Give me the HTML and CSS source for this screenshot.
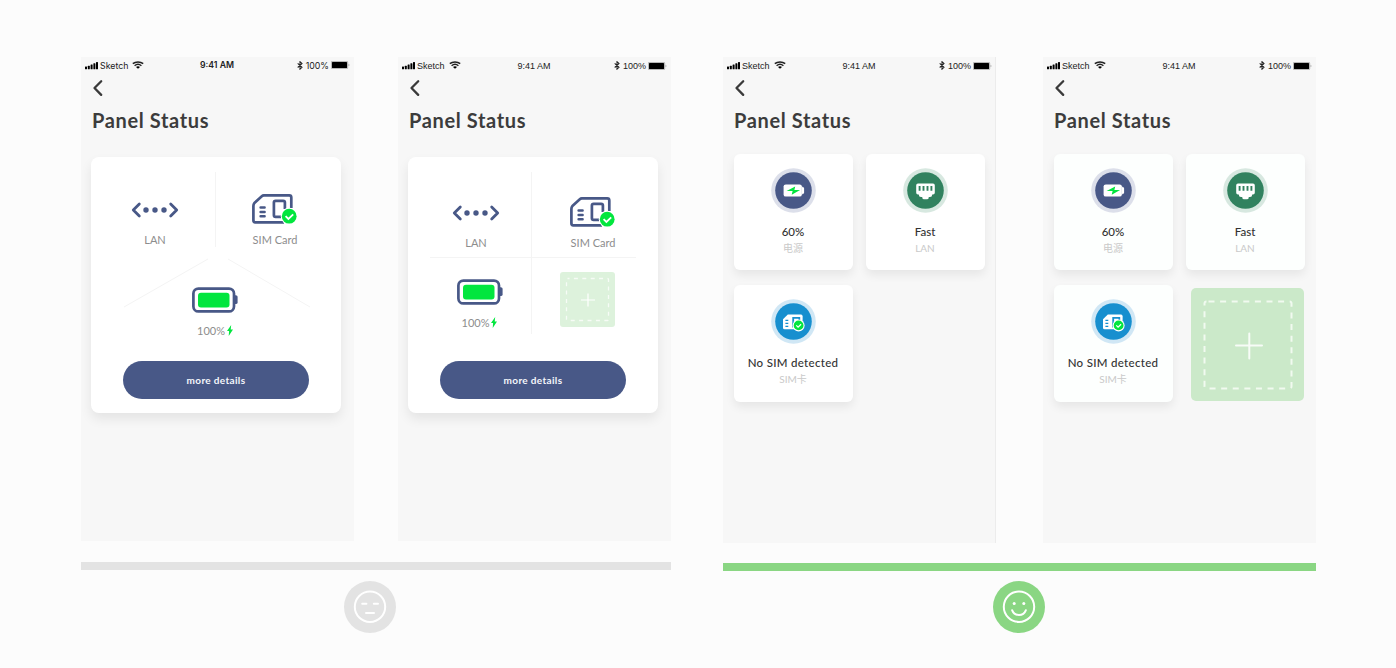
FILE: index.html
```html
<!DOCTYPE html>
<html lang="en">
<head>
<meta charset="utf-8">
<title>Panel Status</title>
<link rel="stylesheet" href="styles.css">
</head>
<body>
<svg width="0" height="0" class="defs">
  <defs>
    <symbol id="signal" viewBox="0 0 13 8"><rect x="0" y="4.6" width="2" height="2.6" rx=".5"/><rect x="2.8" y="3.7" width="2" height="3.5" rx=".5"/><rect x="5.6" y="2.6" width="2" height="4.6" rx=".5"/><rect x="8.4" y="1.2" width="2" height="6" rx=".5"/><rect x="11" y="0" width="2" height="7.2" rx=".5"/></symbol>
    <symbol id="wifi" viewBox="0 0 12 8"><g fill="none" stroke="#222" stroke-width="1.5"><path d="M.8 2.7C3.700.3 8.300.3 11.200 2.700"/><path d="M2.600 4.700C4.600 3 7.400 3 9.400 4.700"/></g><path d="M4 6C5.100 5 6.900 5 8 6L6 7.800Z"/></symbol>
    <symbol id="bluetooth" viewBox="0 0 6 9"><path d="M.7 2.4 5 6.3 3 8.2V.7L5 2.6.7 6.5" fill="none" stroke="#222" stroke-width="1.05"/></symbol>
    <symbol id="power" viewBox="0 0 19 8"><rect x=".3" y=".3" width="16.4" height="7.4" rx="1" fill="#ccc" stroke="#999" stroke-width=".6"/><rect x="1" y="1" width="15" height="6" rx=".5" fill="#000"/><path d="M17.5 2.7v2.6q1-.4 1-1.3t-1-1.3" fill="#aaa"/></symbol>
    <symbol id="back" viewBox="0 0 12 18"><path d="M9.200 2.300 2.500 9 9.200 15.900" fill="none" stroke="#3a3a3a" stroke-width="2.300" stroke-linecap="round" stroke-linejoin="round"/></symbol>
    <symbol id="lan" viewBox="0 0 48 16"><g fill="none" stroke="#485887" stroke-width="2.8" stroke-linecap="round" stroke-linejoin="round"><path d="M8.3 2 2.3 8l6 6"/><path d="m39.7 2 6 6-6 6"/></g><g fill="#485887"><circle cx="15" cy="8" r="2.7"/><circle cx="24" cy="8" r="2.7"/><circle cx="33" cy="8" r="2.7"/></g></symbol>
    <symbol id="sim" viewBox="0 0 46 30"><g fill="none" stroke="#485887" stroke-width="2.7" stroke-linejoin="round"><path d="M39.3 14V3.4Q39.3 1.400 37.3 1.400H11.8Q10.7 1.400 9.8 2.2L2.4 9Q1.400 10.3 1.400 12V26.3Q1.400 28.3 3.2 28.3H32"/><path d="M29 22.900H23.6Q21.9 22.900 21.9 21.2V8.6Q21.9 6.900 23.6 6.900H31.2Q32.9 6.900 32.9 8.6V15"/><path d="M8.6 13.6h4M8.6 18h4M8.6 22.3h4" stroke-width="2.500" stroke-linecap="round"/></g><circle cx="37.2" cy="22.2" r="8.4" fill="#fff"/><circle cx="37.2" cy="22.2" r="7.4" fill="#02e63e"/><path d="m33.6 22.1 2.8 2.8 4.8-4.500" fill="none" stroke="#fff" stroke-width="1.800"/></symbol>
    <symbol id="cell" viewBox="0 0 46 26"><path d="M42 8.2h1.800q1.800 0 1.800 1.6v5.7q0 1.6-1.800 1.6H42z" fill="#485887"/><rect x="1.4" y="1.6" width="40.6" height="22.8" rx="5" fill="#fff" stroke="#485887" stroke-width="2.700"/><rect x="6" y="5.800" width="31.5" height="14.6" rx="3" fill="#02e63e"/></symbol>
    <symbol id="bolt" viewBox="0 0 6 11"><path d="M4.200 0 0 6.1h2.100L1.700 11 6 4.500H3.700z" fill="#02e63e"/></symbol>
    <symbol id="badge-power" viewBox="0 0 45 45"><circle cx="22.5" cy="22.5" r="22.3" fill="#dcdfea"/><circle cx="22.5" cy="22.5" r="18.3" fill="#485887"/><rect x="12.6" y="16.4" width="18.2" height="12.2" rx="2.2" fill="#fff"/><path d="M30.5 17.600l1.200 1.600h.4q1 0 1 1v4.600q0 1-1 1h-.4l-1.200 1.600z" fill="#fff"/><path d="M24.200 18.400 15.600 23h6l-.9 3.800 8.400-4.900h-5.700z" fill="#02e63e"/></symbol>
    <symbol id="badge-lan" viewBox="0 0 45 45"><circle cx="22.5" cy="22.5" r="22.3" fill="#d7e8e0"/><circle cx="22.5" cy="22.5" r="18.3" fill="#31825f"/><path d="M15 15.4h15q1.800 0 1.800 1.800v7.500q0 1.800-1.800 1.800h-.8q0 2.500-2.200 2.500h-1.200q0 2.200-1.500 2.200h-3.600q-1.500 0-1.500-2.200H18q-2.200 0-2.200-2.500H15q-1.800 0-1.800-1.800v-7.500q0-1.800 1.800-1.800z" fill="#fff"/><path d="M16.600 18v4.700M20.500 18v4.700M24.500 18v4.700M28.400 18v4.700" stroke="#31825f" stroke-width="1.900"/></symbol>
    <symbol id="badge-sim" viewBox="0 0 45 45"><circle cx="22.5" cy="22.5" r="22.3" fill="#d0e7f5"/><circle cx="22.5" cy="22.5" r="18.3" fill="#178fcf"/><path d="M16.800 15.600H30q1.600 0 1.600 1.600v13H13.500q-1.500 0-1.500-1.500v-8.400z" fill="#fff"/><path d="M14.4 21.4h2.900M14.4 24.4h2.900M14.4 27.4h2.900" stroke="#178fcf" stroke-width="1.4"/><path d="M22.2 28.5V18.900H28.300V23" fill="none" stroke="#178fcf" stroke-width="1.800"/><circle cx="27.6" cy="26.4" r="6" fill="#fff"/><circle cx="27.6" cy="26.4" r="4.900" fill="#02e63e"/><path d="m25.300 26.300 1.800 1.800 3-2.800" fill="none" stroke="#fff" stroke-width="1.200"/></symbol>
  </defs>
</svg>
<main class="board">
  <section class="group">
    <div class="phones">
      <article class="phone">
        <div class="status inter">
          <div class="side"><svg class="i-signal"><use href="#signal"/></svg><span class="carrier">Sketch</span><svg class="i-wifi"><use href="#wifi"/></svg></div>
          <span class="clock">9:41 AM</span>
          <div class="side end"><svg class="i-bt"><use href="#bluetooth"/></svg><span class="level">100%</span><svg class="i-power"><use href="#power"/></svg></div>
        </div>
        <svg class="back"><use href="#back"/></svg>
        <h1 class="title">Panel Status</h1>
        <div class="panel three">
          <svg class="rules" viewBox="0 0 250 256"><path d="M124.5 15v75M33 150l84-48M137 102l82 48"/></svg>
          <div class="row">
            <div class="item"><svg class="i-lan"><use href="#lan"/></svg><span class="label lan-label">LAN</span></div>
            <div class="item"><svg class="i-sim"><use href="#sim"/></svg><span class="label">SIM Card</span></div>
          </div>
          <div class="item battery"><svg class="i-cell"><use href="#cell"/></svg><span class="label charge">100%<svg class="i-bolt"><use href="#bolt"/></svg></span></div>
          <button class="more">more details</button>
        </div>
      </article>
      <article class="phone">
        <div class="status">
          <div class="side"><svg class="i-signal"><use href="#signal"/></svg><span class="carrier">Sketch</span><svg class="i-wifi"><use href="#wifi"/></svg></div>
          <span class="clock">9:41 AM</span>
          <div class="side end"><svg class="i-bt"><use href="#bluetooth"/></svg><span class="level">100%</span><svg class="i-power"><use href="#power"/></svg></div>
        </div>
        <svg class="back"><use href="#back"/></svg>
        <h1 class="title">Panel Status</h1>
        <div class="panel four">
          <svg class="rules" viewBox="0 0 250 256"><path d="M123.5 15v162M22 100.500h206"/></svg>
          <div class="row">
            <div class="item"><svg class="i-lan"><use href="#lan"/></svg><span class="label lan-label">LAN</span></div>
            <div class="item"><svg class="i-sim"><use href="#sim"/></svg><span class="label">SIM Card</span></div>
          </div>
          <div class="row second">
            <div class="item battery"><svg class="i-cell"><use href="#cell"/></svg><span class="label charge">100%<svg class="i-bolt"><use href="#bolt"/></svg></span></div>
            <svg class="add-small" viewBox="0 0 55 55"><rect width="55" height="55" rx="3" fill="#ddf2dc"/><rect x="6.5" y="6.500" width="42" height="42" rx="1" fill="none" stroke="#fff" stroke-opacity=".75" stroke-width="1.300" stroke-dasharray="4 4.400" stroke-dashoffset="2"/><path d="M21 28h14M28 21.500v13" stroke="#fff" stroke-width="1.200"/></svg>
          </div>
          <button class="more">more details</button>
        </div>
      </article>
    </div>
    <div class="bar"></div>
    <svg class="face" viewBox="0 0 52 52"><circle cx="26" cy="26" r="26" fill="#e3e3e3"/><g fill="none" stroke="#fff" stroke-width="2" stroke-linecap="round"><circle cx="26" cy="25.700" r="15.200"/><path d="M18.200 22.700h4.200M29.800 22.700h4.200M22 31.900h8"/></g></svg>
  </section>
  <section class="group good">
    <div class="phones">
      <article class="phone edged">
        <div class="status">
          <div class="side"><svg class="i-signal"><use href="#signal"/></svg><span class="carrier">Sketch</span><svg class="i-wifi"><use href="#wifi"/></svg></div>
          <span class="clock">9:41 AM</span>
          <div class="side end"><svg class="i-bt"><use href="#bluetooth"/></svg><span class="level">100%</span><svg class="i-power"><use href="#power"/></svg></div>
        </div>
        <svg class="back"><use href="#back"/></svg>
        <h1 class="title">Panel Status</h1>
        <div class="tiles">
          <div class="tile"><svg class="badge"><use href="#badge-power"/></svg><strong class="value">60%</strong><span class="name">电源</span></div>
          <div class="tile"><svg class="badge"><use href="#badge-lan"/></svg><strong class="value">Fast</strong><span class="name">LAN</span></div>
          <div class="tile"><svg class="badge"><use href="#badge-sim"/></svg><strong class="value wide">No SIM detected</strong><span class="name">SIM卡</span></div>
        </div>
      </article>
      <article class="phone">
        <div class="status">
          <div class="side"><svg class="i-signal"><use href="#signal"/></svg><span class="carrier">Sketch</span><svg class="i-wifi"><use href="#wifi"/></svg></div>
          <span class="clock">9:41 AM</span>
          <div class="side end"><svg class="i-bt"><use href="#bluetooth"/></svg><span class="level">100%</span><svg class="i-power"><use href="#power"/></svg></div>
        </div>
        <svg class="back"><use href="#back"/></svg>
        <h1 class="title">Panel Status</h1>
        <div class="tiles tinted">
          <div class="tile"><svg class="badge"><use href="#badge-power"/></svg><strong class="value">60%</strong><span class="name">电源</span></div>
          <div class="tile"><svg class="badge"><use href="#badge-lan"/></svg><strong class="value">Fast</strong><span class="name">LAN</span></div>
          <div class="tile"><svg class="badge"><use href="#badge-sim"/></svg><strong class="value wide">No SIM detected</strong><span class="name">SIM卡</span></div>
          <svg class="add" viewBox="0 0 113 113"><rect width="113" height="113" rx="5" fill="#cbe9c9"/><rect x="13.500" y="13.500" width="87" height="87" rx="2" fill="none" stroke="#f1faf0" stroke-width="2" stroke-dasharray="6 5.600" stroke-dashoffset="-2"/><path d="M45 57.500h26M58.300 45.500v25" stroke="#fff" stroke-opacity=".85" stroke-width="2" stroke-linecap="round"/></svg>
        </div>
      </article>
    </div>
    <div class="bar"></div>
    <svg class="face" viewBox="0 0 52 52"><circle cx="26" cy="26" r="26" fill="#8ad683"/><g fill="none" stroke="#fff" stroke-width="2" stroke-linecap="round"><circle cx="26" cy="25.700" r="15.200"/><path d="M19.200 29.300a7.300 7.300 0 0 0 13.600 0"/></g><circle cx="21.200" cy="22.500" r="1.500" fill="#fff"/><circle cx="30.800" cy="22.500" r="1.500" fill="#fff"/></svg>
  </section>
</main>
</body>
</html>
```
FILE: styles.css
```css
* { box-sizing: border-box; }
body { margin: 0; background: #fcfcfc; font-family: Lato, "Noto Sans CJK SC", sans-serif; }
svg { display: block; flex: none; }
.defs { position: absolute; }
.board { display: flex; gap: 52px; width: 1396px; height: 668px; padding: 57px 80px 0 81px; overflow: hidden; }
.group { display: flex; flex-direction: column; width: 590px; }
.good { width: 593px; }
.phones { display: flex; justify-content: space-between; }
.phone { width: 273px; height: 484px; background: #f7f7f7; }
.good .phone { height: 486px; }
.edged { box-shadow: inset -1px 0 #ececec; }
.bar { height: 8px; margin-top: 20.500px; background: #e3e3e3; }
.good .bar { background: #8ad683; margin-top: 20px; }
.face { width: 52px; height: 52px; margin: 11.500px 0 0 263px; }
.good .face { margin: 10px 0 0 270px; }

.status { display: grid; grid-template-columns: 1fr auto 1fr; align-items: center; height: 17px; padding: 0 5px 0 4px; font: 9px/17px "Liberation Sans", sans-serif; color: #222; }
.side { display: flex; align-items: center; }
.end { justify-content: flex-end; }
.clock { padding-top: 1px; }
.carrier { width: 34px; padding: 1px 0 0 2px; }
.level { padding: 1px 2px 0 3px; }
.inter { font-family: Inter, sans-serif; font-size: 8.800px; }
.inter .carrier { width: 34px; }
.inter .clock { font-weight: 600; padding: 0; font-size: 8.700px; }
.inter .carrier, .inter .level { padding-top: 0; }
.i-signal { width: 13px; height: 8px; }
.i-wifi { width: 12px; height: 8px; margin-bottom: 2px; }
.i-bt { width: 6px; height: 9px; margin-bottom: 1px; }
.i-power { width: 19px; height: 8px; margin: 0 -1px 1px 0; }

.back { width: 12px; height: 18px; margin: 5px 0 0 11px; }
.title { margin: 10.500px 0 0 11px; font-size: 20px; line-height: 24px; font-weight: 700; letter-spacing: .63px; color: #3c3c3c; }

.panel { position: relative; display: flex; flex-direction: column; width: 250px; height: 256px; margin: 25.500px 0 0 10px; background: #fff; border-radius: 8px; box-shadow: 0 6px 12px rgba(0,0,0,.08); }
.rules { position: absolute; inset: 0; width: 250px; height: 256px; fill: none; stroke: #f4f4f4; stroke-width: 1; }
.row { display: flex; justify-content: space-between; }
.item { position: relative; display: flex; flex-direction: column; align-items: center; }
.label { font-size: 11px; line-height: 14px; color: #8d8d8d; white-space: nowrap; }
.three .row { padding: 36.500px 43px 0 40px; }
.four .row { padding: 39.500px 42px 0 44px; }
.i-lan { width: 48px; height: 16px; margin-top: 8.500px; }
.lan-label { margin-top: 15px; }
.i-sim { width: 46px; height: 30px; margin-bottom: 9px; }
.i-cell { width: 46px; height: 26px; }
.charge { display: flex; align-items: center; gap: 2px; margin-top: 11px; }
.i-bolt { width: 6px; height: 11px; margin-bottom: 1px; }
.three .battery { margin: 39.500px 2px 0 0; }
.four .second { padding: 22.500px 43px 0 48.500px; align-items: flex-start; }
.four .battery { margin-top: 6.500px; }
.add-small { width: 55px; height: 55px; margin-top: -1px; }
.more { position: relative; width: 186px; height: 38px; margin: auto 32px 14px; padding: 0 0 1px; border: 0; border-radius: 19px; background: #485887; color: #f4f6fb; font: 700 10px/14px Lato, sans-serif; letter-spacing: .35px; }

.tiles { display: grid; grid-template-columns: 119px 119px; grid-template-rows: 116px 117px; gap: 15px 13px; margin: 22px 0 0 11px; }
.tile { display: flex; flex-direction: column; align-items: center; padding: 14px 1px 0 0; background: #fff; border-radius: 6px; box-shadow: 0 5px 10px rgba(0,0,0,.07); }
.tinted .tile { background: #fdfffe; }
.badge { width: 45px; height: 45px; }
.value { margin-top: 12px; font-size: 11.500px; line-height: 14px; font-weight: 500; color: #333; }
.wide { letter-spacing: .3px; }
.name { margin-top: 2px; font-size: 10px; line-height: 14px; color: #c9c9c9; }
.add { width: 113px; height: 113px; margin: 3.500px 0 0 5px; }
```
